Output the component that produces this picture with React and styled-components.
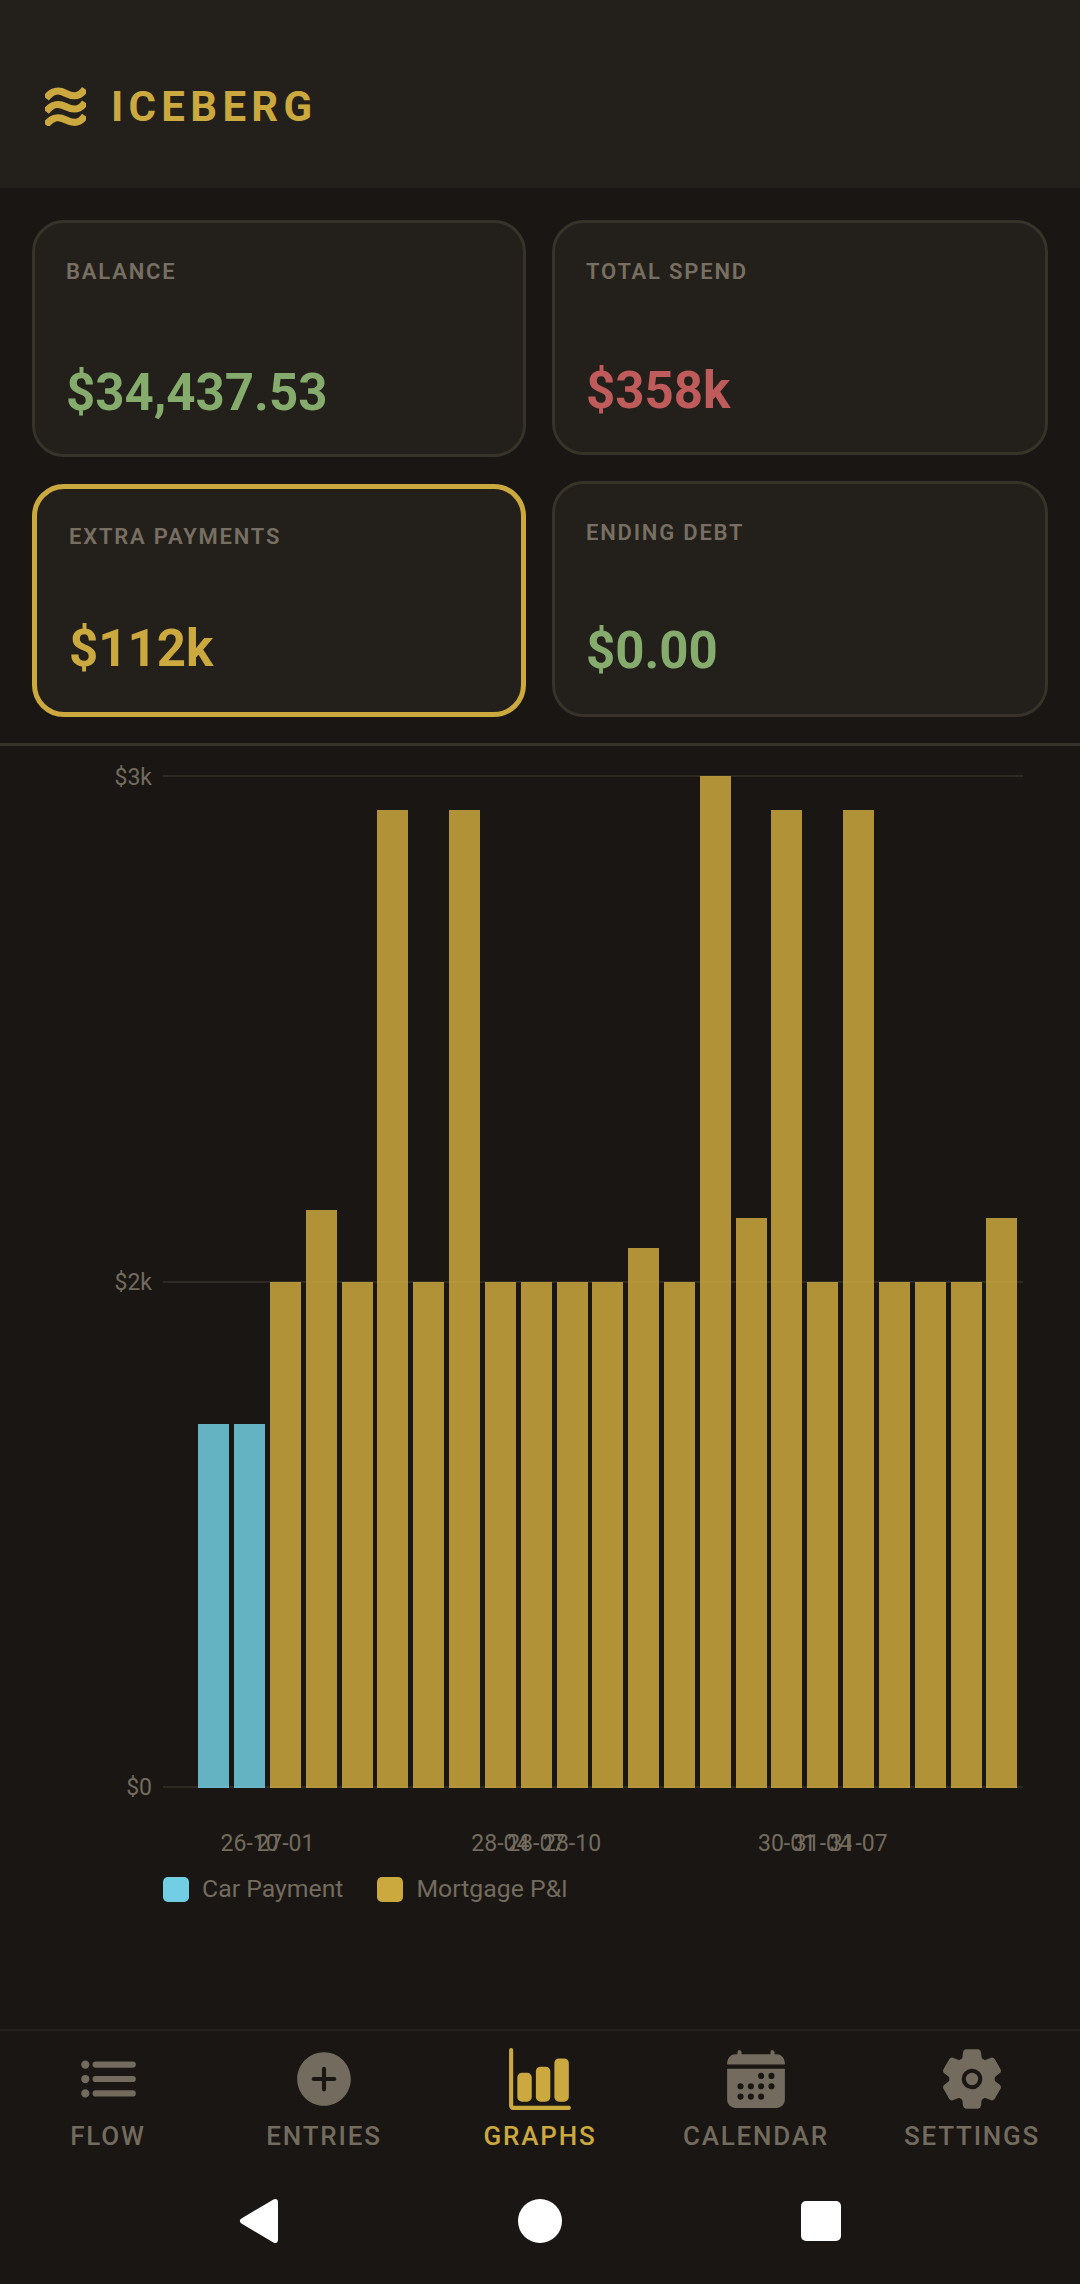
import styled, { createGlobalStyle } from "styled-components";
import { IoList, IoAddCircle, IoBarChart, IoCalendar, IoSettings } from "react-icons/io5";

const BAR_HEIGHTS = [
  364, 364, 506, 578, 506, 978, 506, 978, 506, 506, 506, 506, 540, 506, 1012, 570, 978, 506, 978, 506, 506, 506, 570
];

const X_TICKS = {
  2: "26-10",
  3: "27-01",
  9: "28-04",
  10: "28-07",
  11: "28-10",
  17: "30-01",
  18: "31-04",
  19: "31-07"
};

const NAV_ITEMS = [
  { label: "FLOW", icon: IoList },
  { label: "ENTRIES", icon: IoAddCircle },
  { label: "GRAPHS", icon: IoBarChart, active: true },
  { label: "CALENDAR", icon: IoCalendar },
  { label: "SETTINGS", icon: IoSettings }
];

export default function App() {
  return (
    <Page>
      <GlobalStyle />
      <Header>
        <Logo viewBox="0 0 40 38">
          <path d="M1 11 C8 2 14 3 20 6 S33 11 39 2" />
          <path d="M1 24 C8 15 14 16 20 19 S33 24 39 15" />
          <path d="M1 37 C8 28 14 29 20 32 S33 37 39 28" />
        </Logo>
        <Brand>ICEBERG</Brand>
      </Header>

      <Stats>
        <LeftColumn>
          <Card $height={237} $bottom={31}>
            <CardLabel>BALANCE</CardLabel>
            <CardValue $color="#85ab6d">$34,437.53</CardValue>
          </Card>
          <Card $height={233} $bottom={33} $active>
            <CardLabel>EXTRA PAYMENTS</CardLabel>
            <CardValue $color="#cba93e">$112k</CardValue>
          </Card>
        </LeftColumn>
        <RightColumn>
          <Card $height={235} $bottom={31}>
            <CardLabel>TOTAL SPEND</CardLabel>
            <CardValue $color="#bf5b5b">$358k</CardValue>
          </Card>
          <Card $height={236} $bottom={33}>
            <CardLabel>ENDING DEBT</CardLabel>
            <CardValue $color="#85ab6d">$0.00</CardValue>
          </Card>
        </RightColumn>
      </Stats>

      <ChartSection>
        <ChartRow>
          <YAxis>
            <AxisLabel>$3k</AxisLabel>
            <AxisLabel>$2k</AxisLabel>
            <AxisLabel>$0</AxisLabel>
          </YAxis>
          <Plot>
            <GridLines>
              <GridLine />
              <GridLine />
              <GridLine />
            </GridLines>
            <Bars>
              <BarSlot />
              {BAR_HEIGHTS.map((height, i) => (
                <BarSlot key={i}>
                  <Bar $car={i < 2} style={{ height }} />
                </BarSlot>
              ))}
            </Bars>
          </Plot>
        </ChartRow>
        <XAxis>
          {Array.from({ length: 24 }, (_, i) => (
            <XTick key={i}>{X_TICKS[i] && <AxisLabel>{X_TICKS[i]}</AxisLabel>}</XTick>
          ))}
        </XAxis>
        <Legend>
          <LegendItem>
            <Swatch $color="#72cfe3" />
            <LegendText>Car Payment</LegendText>
          </LegendItem>
          <LegendItem>
            <Swatch $color="#cba93e" />
            <LegendText>Mortgage P&amp;I</LegendText>
          </LegendItem>
        </Legend>
      </ChartSection>

      <TabBar>
        {NAV_ITEMS.map(({ label, icon: Icon, active }) => (
          <Tab key={label} $active={active}>
            <Icon size={66} />
            <TabLabel>{label}</TabLabel>
          </Tab>
        ))}
      </TabBar>

      <SystemBar>
        <SystemButton>
          <svg width="40" height="44" viewBox="0 0 40 44">
            <path d="M36 3 L4 22 L36 41 Z" fill="#fff" stroke="#fff" strokeWidth="6" strokeLinejoin="round" />
          </svg>
        </SystemButton>
        <SystemButton>
          <HomeDot />
        </SystemButton>
        <SystemButton>
          <RecentSquare />
        </SystemButton>
      </SystemBar>
    </Page>
  );
}

const GlobalStyle = createGlobalStyle`
  * {
    box-sizing: border-box;
  }

  body {
    margin: 0;
    background: #191613;
    font-family: Roboto, "Liberation Sans", sans-serif;
  }
`;

const Page = styled.div`
  width: 1080px;
  height: 2284px;
  display: flex;
  flex-direction: column;
  background: #191613;
  overflow: hidden;
`;

const Header = styled.header`
  height: 188px;
  flex-shrink: 0;
  display: flex;
  align-items: center;
  gap: 25px;
  padding: 24px 0 0 45px;
  background: #23201b;
`;

const Logo = styled.svg`
  width: 41px;
  height: 39px;
  fill: none;
  stroke: #cba93e;
  stroke-width: 7;
`;

const Brand = styled.div`
  font-size: 42px;
  font-weight: 700;
  letter-spacing: 5.3px;
  color: #cba93e;
`;

const Stats = styled.section`
  display: flex;
  gap: 26px;
  padding: 32px 32px 26px;
  border-bottom: 3px solid #37322a;
`;

const LeftColumn = styled.div`
  width: 494px;
  display: flex;
  flex-direction: column;
  gap: 27px;
`;

const RightColumn = styled.div`
  flex: 1;
  display: flex;
  flex-direction: column;
  gap: 26px;
`;

const Card = styled.div`
  height: ${(p) => p.$height}px;
  display: flex;
  flex-direction: column;
  justify-content: space-between;
  padding: ${(p) => (p.$active ? "35px" : "36px")} ${(p) => (p.$active ? "32px" : "31px")} ${(p) => p.$bottom}px;
  background: #23201b;
  border: ${(p) => (p.$active ? "5px solid #cba93e" : "3px solid #37322a")};
  border-radius: 32px;
`;

const CardLabel = styled.div`
  font-size: 22px;
  line-height: 26px;
  font-weight: 600;
  letter-spacing: 1.8px;
  color: #786f62;
`;

const CardValue = styled.div`
  font-size: 51px;
  line-height: 60px;
  font-weight: 700;
  color: ${(p) => p.$color};
`;

const ChartSection = styled.main`
  padding-top: 29px;
`;

const ChartRow = styled.div`
  display: flex;
  padding-right: 57px;
`;

const YAxis = styled.div`
  width: 163px;
  flex-shrink: 0;
  display: flex;
  flex-direction: column;
  justify-content: space-between;
  align-items: flex-end;
  padding-right: 11px;
  margin: -11px 0 -14px;
`;

const AxisLabel = styled.span`
  font-size: 23px;
  line-height: 28px;
  font-weight: 400;
  white-space: nowrap;
  color: #736b5e;
`;

const Plot = styled.div`
  position: relative;
  flex: 1;
  height: 1013px;
`;

const GridLines = styled.div`
  position: absolute;
  inset: 0;
  display: flex;
  flex-direction: column;
  justify-content: space-between;
`;

const GridLine = styled.div`
  height: 2px;
  background: #2e2a23;
`;

const Bars = styled.div`
  position: relative;
  height: 100%;
  display: flex;
  align-items: flex-end;
  margin: 0 3px 0 -3px;
`;

const BarSlot = styled.div`
  flex: 1;
  display: flex;
  justify-content: center;
`;

const Bar = styled.div`
  width: 31px;
  background: ${(p) => (p.$car ? "#72cfe3" : "#cda83d")};
  opacity: 0.85;
`;

const XAxis = styled.div`
  display: flex;
  height: 28px;
  margin: 42px 60px 0 160px;
`;

const XTick = styled.div`
  flex: 1;
  width: 0;
  display: flex;
  justify-content: center;
`;

const Legend = styled.div`
  display: flex;
  gap: 34px;
  margin: 16px 0 0 163px;
`;

const LegendItem = styled.div`
  display: flex;
  align-items: center;
  gap: 13px;
`;

const Swatch = styled.div`
  width: 26px;
  height: 25px;
  border-radius: 5px;
  background: ${(p) => p.$color};
`;

const LegendText = styled.span`
  font-size: 24.8px;
  line-height: 30px;
  font-weight: 400;
  color: #736b5e;
`;

const TabBar = styled.nav`
  margin-top: auto;
  height: 129px;
  display: flex;
  padding-top: 15px;
  border-top: 2px solid #25221d;
`;

const Tab = styled.div`
  width: 216px;
  display: flex;
  flex-direction: column;
  align-items: center;
  gap: 9px;
  color: ${(p) => (p.$active ? "#cba93e" : "#736b5e")};
`;

const TabLabel = styled.span`
  font-size: 26px;
  line-height: 30px;
  font-weight: 500;
  letter-spacing: 1.8px;
`;

const SystemBar = styled.div`
  height: 126px;
  flex-shrink: 0;
  display: flex;
  justify-content: center;
  align-items: center;
`;

const SystemButton = styled.div`
  width: 281px;
  display: flex;
  justify-content: center;
  align-items: center;
`;

const HomeDot = styled.div`
  width: 44px;
  height: 44px;
  border-radius: 50%;
  background: #fff;
`;

const RecentSquare = styled.div`
  width: 40px;
  height: 40px;
  border-radius: 5px;
  background: #fff;
`;
